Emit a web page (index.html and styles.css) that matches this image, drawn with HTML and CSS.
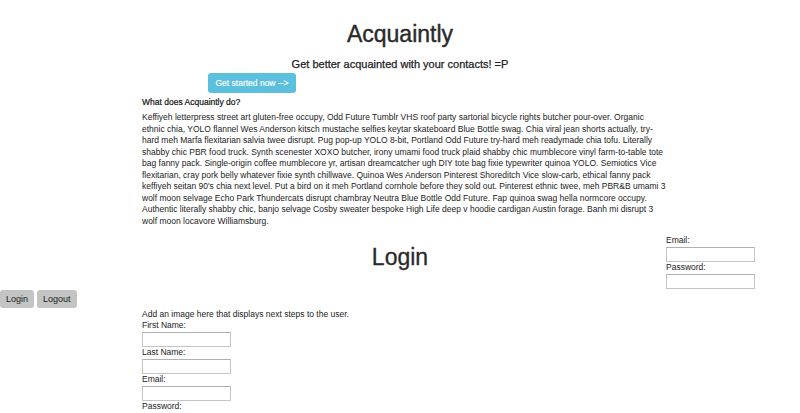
FILE: index.html
```html
<!DOCTYPE html>
<html>
<head>
<meta charset="utf-8">
<link rel="stylesheet" href="styles.css">
</head>
<body>
<header class="hero">
  <h1 class="title">Acquaintly</h1>
  <p class="tagline">Get better acquainted with your contacts! =P</p>
</header>
<main class="container">
  <a class="btn-start" href="#">Get started now --&gt;</a>
  <h2 class="about-title">What does Acquaintly do?</h2>
  <p class="about-text">Keffiyeh letterpress street art gluten-free occupy, Odd Future Tumblr VHS roof party sartorial bicycle rights butcher pour-over. Organic ethnic chia, YOLO flannel Wes Anderson kitsch mustache selfies keytar skateboard Blue Bottle swag. Chia viral jean shorts actually, try-hard meh Marfa flexitarian salvia twee disrupt. Pug pop-up YOLO 8-bit, Portland Odd Future try-hard meh readymade chia tofu. Literally shabby chic PBR food truck. Synth scenester XOXO butcher, irony umami food truck plaid shabby chic mumblecore vinyl farm-to-table tote bag fanny pack. Single-origin coffee mumblecore yr, artisan dreamcatcher ugh DIY tote bag fixie typewriter quinoa YOLO. Semiotics Vice flexitarian, cray pork belly whatever fixie synth chillwave. Quinoa Wes Anderson Pinterest Shoreditch Vice slow-carb, ethical fanny pack keffiyeh seitan 90's chia next level. Put a bird on it meh Portland cornhole before they sold out. Pinterest ethnic twee, meh PBR&amp;B umami 3 wolf moon selvage Echo Park Thundercats disrupt chambray Neutra Blue Bottle Odd Future. Fap quinoa swag hella normcore occupy. Authentic literally shabby chic, banjo selvage Cosby sweater bespoke High Life deep v hoodie cardigan Austin forage. Banh mi disrupt 3 wolf moon locavore Williamsburg.</p>
</main>
<section class="login-row">
  <div class="spacer"></div>
  <h2 class="login-title">Login</h2>
  <form class="login-form">
    <label class="field-label">Email:</label>
    <input class="field" type="text">
    <label class="field-label">Password:</label>
    <input class="field" type="password">
  </form>
</section>
<nav class="auth-buttons">
  <button class="btn-gray">Login</button>
  <button class="btn-gray">Logout</button>
</nav>
<section class="container signup">
  <p class="next-steps">Add an image here that displays next steps to the user.</p>
  <label class="field-label">First Name:</label>
  <input class="field" type="text">
  <label class="field-label">Last Name:</label>
  <input class="field" type="text">
  <label class="field-label">Email:</label>
  <input class="field" type="text">
  <label class="field-label">Password:</label>
  <input class="field" type="password">
</section>
</body>
</html>
```

FILE: styles.css
```css
html, body {
  margin: 0;
  padding: 0;
  background: #ffffff;
  color: #333333;
  font-family: "Liberation Sans", Arial, sans-serif;
}

.hero {
  text-align: center;
  padding-top: 21px;
}

.title {
  margin: 0;
  font-size: 23px;
  line-height: 26px;
  font-weight: normal;
  color: #2a2a2a;
  -webkit-text-stroke: 0.4px #2a2a2a;
}

.tagline {
  margin: 10px 0 0;
  font-size: 11px;
  line-height: 14px;
  color: #222;
  -webkit-text-stroke: 0.25px #222;
}

.container {
  width: 526px;
  margin: 0 0 0 142px;
}

.btn-start {
  display: flex;
  align-items: center;
  justify-content: center;
  margin: 2px 0 0 66px;
  width: 88px;
  height: 20px;
  border-radius: 3px;
  background: #5bc0de;
  color: #ffffff;
  font-size: 8.5px;
  text-decoration: none;
  -webkit-text-stroke: 0.15px #ffffff;
}

.about-title {
  margin: 4px 0 0;
  font-size: 8.5px;
  line-height: 11px;
  font-weight: normal;
  color: #111;
  -webkit-text-stroke: 0.2px #111;
}

.about-text {
  margin: 4px 0 0;
  font-size: 8.5px;
  line-height: 11.5px;
  color: #222;
}

.login-row {
  display: grid;
  grid-template-columns: 1fr auto 1fr;
  align-items: start;
  margin-top: 8px;
}

.login-title {
  margin: 9px 0 0;
  font-size: 23px;
  line-height: 26px;
  font-weight: normal;
  color: #2a2a2a;
  -webkit-text-stroke: 0.3px #2a2a2a;
}

.login-form {
  justify-self: end;
  margin: 0 45px 0 0;
  display: flex;
  flex-direction: column;
  width: 89px;
}

.field-label {
  display: block;
  font-size: 8.5px;
  line-height: 11px;
  color: #222;
}

.field {
  display: block;
  box-sizing: border-box;
  width: 89px;
  height: 15px;
  margin: 1px 0 0;
  padding: 0;
  border: 1px solid #c4c4c4;
  border-top-color: #b0b0b0;
  background: #fff;
}

.auth-buttons {
  display: flex;
  gap: 3px;
  margin-top: 1px;
}

.btn-gray {
  height: 18px;
  padding: 0 6px;
  border: none;
  border-radius: 3px;
  background: #c4c4c4;
  color: #222;
  font-family: "Liberation Sans", Arial, sans-serif;
  font-size: 9px;
}

.signup {
  margin-top: 1px;
}

.next-steps {
  margin: 0;
  font-size: 8.5px;
  line-height: 11px;
  color: #222;
}
```
